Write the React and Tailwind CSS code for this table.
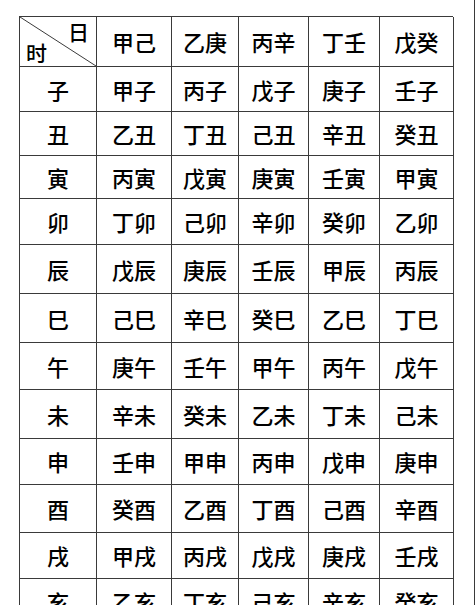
const columns = ["甲己", "乙庚", "丙辛", "丁壬", "戊癸"];

// 时 → 各日干对应的时柱
const rows = [
  ["子", "甲子", "丙子", "戊子", "庚子", "壬子"],
  ["丑", "乙丑", "丁丑", "己丑", "辛丑", "癸丑"],
  ["寅", "丙寅", "戊寅", "庚寅", "壬寅", "甲寅"],
  ["卯", "丁卯", "己卯", "辛卯", "癸卯", "乙卯"],
  ["辰", "戊辰", "庚辰", "壬辰", "甲辰", "丙辰"],
  ["巳", "己巳", "辛巳", "癸巳", "乙巳", "丁巳"],
  ["午", "庚午", "壬午", "甲午", "丙午", "戊午"],
  ["未", "辛未", "癸未", "乙未", "丁未", "己未"],
  ["申", "壬申", "甲申", "丙申", "戊申", "庚申"],
  ["酉", "癸酉", "乙酉", "丁酉", "己酉", "辛酉"],
  ["戌", "甲戌", "丙戌", "戊戌", "庚戌", "壬戌"],
  ["亥", "乙亥", "丁亥", "己亥", "辛亥", "癸亥"],
];

// scanned table: row heights are uneven
const rowHeights = [
  "h-[45px]", "h-[44px]", "h-[43px]", "h-[46px]", "h-[49px]", "h-[49px]",
  "h-[47px]", "h-[49px]", "h-[46px]", "h-[48px]", "h-[46px]", "h-[46px]",
];

const cell =
  "flex items-center justify-center border-r border-b border-[#3a3a3a] text-[22px] font-medium text-black";

export default function App() {
  return (
    <div
      className="h-[605px] w-[475px] overflow-hidden border-r border-[#3a3a3a] bg-white pl-[19px] pt-[16px]"
      style={{ fontFamily: '"Noto Sans CJK SC", "Noto Sans", sans-serif' }}
    >
      <div className="grid w-[434px] grid-cols-[77px_75px_67px_70px_71px_74px] border-l border-t border-[#3a3a3a]">
        {/* header */}
        <div className="relative h-[50px] border-r border-b border-[#3a3a3a] text-[21px] font-medium text-black">
          <svg className="absolute inset-0 h-full w-full" viewBox="0 0 76 49" preserveAspectRatio="none">
            <line x1="0" y1="0" x2="76" y2="49" stroke="#3a3a3a" strokeWidth="1" />
          </svg>
          <span className="absolute right-[7px] top-[4px] leading-none">日</span>
          <span className="absolute bottom-[3px] left-[6px] leading-none">时</span>
        </div>
        {columns.map((c) => (
          <div key={c} className={`${cell} h-[50px]`}>
            {c}
          </div>
        ))}

        {rows.map((r, i) =>
          r.map((v, j) => (
            <div key={`${i}-${j}`} className={`${cell} ${rowHeights[i]}`}>
              {v}
            </div>
          ))
        )}
      </div>
    </div>
  );
}
